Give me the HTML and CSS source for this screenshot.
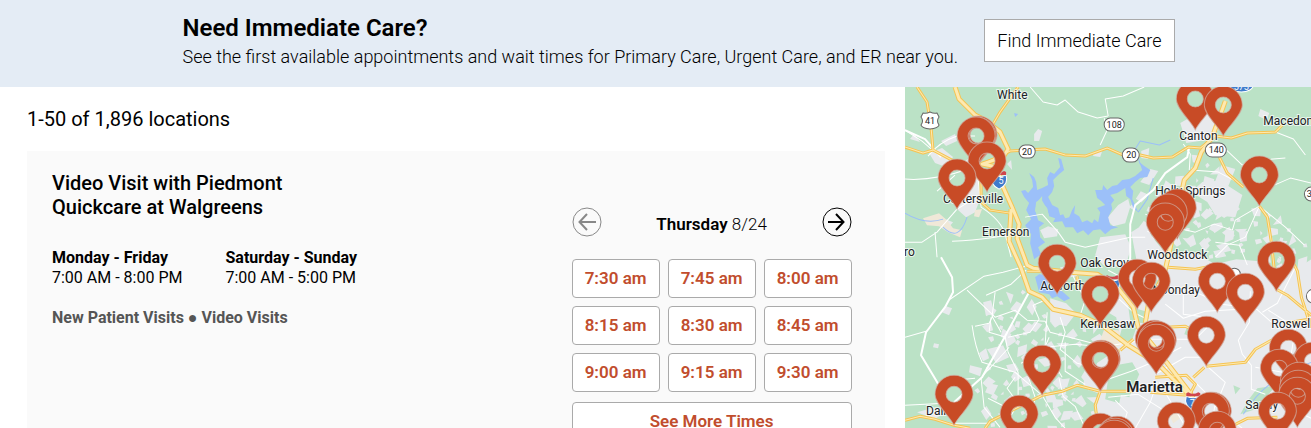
FILE: index.html
```html
<!doctype html>
<html lang="en">
    <head>
        <meta charset="utf-8">
        <title>Locations</title>
        <link rel="stylesheet" href="styles.css">
    </head>
    <body>
        <header class="banner">
            <div class="banner-inner">
                <div>
                    <h1>Need Immediate Care?</h1>
                    <p>See the first available appointments and wait times for Primary Care, Urgent Care, and ER near you.</p>
                </div>
                <a class="banner-link" href="#care">Find Immediate Care</a>
            </div>
        </header>
        <div class="page">
            <main class="results">
                <p class="count">1-50 of 1,896 locations</p>
                <article class="card">
                    <div class="info">
                        <h2>Video Visit with Piedmont Quickcare at Walgreens</h2>
                        <dl class="hours">
                            <div>
                                <dt>Monday - Friday</dt>
                                <dd>7:00 AM - 8:00 PM</dd>
                            </div>
                            <div>
                                <dt>Saturday - Sunday</dt>
                                <dd>7:00 AM - 5:00 PM</dd>
                            </div>
                        </dl>
                        <p class="visits">New Patient Visits ● Video Visits</p>
                    </div>
                    <div class="schedule">
                        <div class="day">
                            <button type="button" class="arrow" aria-label="Previous day" disabled>
                                <svg viewBox="0 0 30 30"><circle cx="15" cy="15" r="14"/><path d="M24 15H8M15 7L7.500 15L15 23"/></svg>
                            </button>
                            <p><b>Thursday</b> 8/24</p>
                            <button type="button" class="arrow" aria-label="Next day">
                                <svg viewBox="0 0 30 30"><circle cx="15" cy="15" r="14"/><path d="M6 15H22M14 7L21.500 15L14 23"/></svg>
                            </button>
                        </div>
                        <div class="slots">
                            <button type="button">7:30 am</button>
                            <button type="button">7:45 am</button>
                            <button type="button">8:00 am</button>
                            <button type="button">8:15 am</button>
                            <button type="button">8:30 am</button>
                            <button type="button">8:45 am</button>
                            <button type="button">9:00 am</button>
                            <button type="button">9:15 am</button>
                            <button type="button">9:30 am</button>
                        </div>
                        <button type="button" class="more">See More Times</button>
                    </div>
                </article>
            </main>
            <aside class="map">
                <svg viewBox="0 0 406 341" preserveAspectRatio="xMinYMin slice" role="img" aria-label="Map of locations">
                    <defs>
                        <path id="pin" d="M0 0C-4 -9 -19 -21 -19 -31A19 19 0 0 1 19 -31C19 -21 4 -9 0 0ZM0 -39A8 8 0 1 0 0 -23A8 8 0 1 0 0 -39Z"/>
                        <path id="blocks" d="M2 3l9-4 2 8-6 2zM20 2l3 1-1 4-3-2zM32 -1l4 7-8 5zM8 14l5-1 1 4-3 2zM24 15l10-2 2 5-9 6zM43 9l3-1 1 4-4 0zM-1 30l7-5 3 10-6 3zM16 31l5-3 3 3-5 4zM38 24l9-3-1 9-9 4zM6 44l4-1 1 3-4 2zM26 42l9-2 4 7-10 2zM44 40l4 1-1 4-3-1zM18 21l3 1-1 3z"/>
                        <g id="interstate">
                            <path class="shield" d="M-7 -4Q0 -1 7 -4Q10 5 0 10Q-10 5 -7 -4Z"/>
                            <path class="shield-top" d="M-7 -7L-5 -8Q0 -5 5 -8L7 -7L7 -4H-7Z"/>
                        </g>
                        <path id="state-roads" d="M12 0L22 15L26 40L28 63L45 72L60 80L76 93L76 115L85 123L105 126M0 60L18 66L28 63M80 76L105 64L120 63L140 62L160 68L180 69L202 61L218 68L235 68L248 71L267 70L283 60L295 61L310 49L326 51L342 46L370 45L377 38M113 0L95 25L85 42M314 70L322 86L338 100M354 119L362 130L366 155L371 202L382 208L406 228M0 333L15 329L30 332L49 338L65 341M80 341L85 334L101 326L137 308L157 304L172 298L195 304L228 304M195 304L190 318L192 333M301 279L340 275L350 262L366 253L383 252M263 180L290 182L311 178M386 172L392 184L396 210L403 232L380 236M203 256L213 264L210 277M215 263L228 252M261 240L280 239L290 244M245 305L282 308M250 290L281 288L290 297L284 308M299 280L288 290M322 341L342 331L372 330M122 184H145M172 189V202"/>
                        <path id="freeways" d="M50 0L54 12L70 28L80 33L95 45L103 62L98 70L77 77L92 80L98 100L107 120L114 137L112 151L122 178L128 181L165 185L192 187L212 200L228 220L233 240L262 276L285 306L305 341M106 122L104 154L116 181L124 204L137 210L148 222L175 228L197 238L223 258L252 276L285 309M320 14L307 50L296 65L290 81L279 93L276 108L264 165L259 187L243 218L240 236"/>
                    </defs>
                    <rect class="land" width="406" height="341"/>

                    <!-- built-up areas -->
                    <g class="urban">
                        <path d="M60 74L68 68L73 93L75 112L70 125L61 130L53 123L55 108L62 98ZM24 66L37 61L48 70L41 80L30 76ZM9 47L15 55L5 52ZM36 54l14-7 2 7-11 5zM129 47l4-5 4 2-3 10-5 0zM188 65l9-1-2 6-7-1z"/>
                        <path d="M135 143l8-4 10 3-1 7-13 2zM201 132L213 118L223 112L225 120L220 136L208 139ZM195 150L220 147L226 160L220 180L198 178L190 168ZM235 95L245 82L253 84L244 98ZM236 64l8-3-1 11-7-1zM275 36L300 22L313 43L301 53L281 56Z"/>
                        <path d="M226 145L240 136L247 150L265 172L290 166L310 177L331 172L354 174L368 183L382 176L392 181L406 172V341H200L190 322L195 307L178 300L180 283L192 277L186 258L202 245L214 246L211 230L196 221L210 207L225 200L218 185L232 177Z"/>
                        <path d="M145 211L161 216L171 226L161 239L145 235ZM155 180L168 178L172 189L157 191Z"/>
                        <path d="M316 78L330 82L323 99L337 108L330 130L310 128L302 115L286 105L297 95L310 94Z"/>
                        <path d="M82 262L98 258L104 270L91 276ZM78 215l8-2 3 12-8 4zM84 296l9 2-5 10-8-3zM65 278l12 3-2 8-11-4z"/>
                        <use href="#blocks" transform="translate(282 122)"/>
                        <use href="#blocks" transform="translate(283 121) rotate(80)"/>
                        <use href="#blocks" transform="translate(345 118) rotate(20)"/>
                        <use href="#blocks" transform="translate(355 148)"/>
                        <use href="#blocks" transform="translate(330 112) rotate(70)"/>
                        <use href="#blocks" transform="translate(286 64) rotate(30)"/>
                        <use href="#blocks" transform="translate(262 90) rotate(60)"/>
                        <use href="#blocks" transform="translate(77 226) rotate(-40)"/>
                        <use href="#blocks" transform="translate(75 236)"/>
                        <use href="#blocks" transform="translate(152 226) rotate(70)"/>
                        <use href="#blocks" transform="translate(122 262) rotate(10)"/>
                        <use href="#blocks" transform="translate(158 246) rotate(-20)"/>
                        <use href="#blocks" transform="translate(112 280) rotate(70)"/>
                        <use href="#blocks" transform="translate(128 291) rotate(15)"/>
                        <use href="#blocks" transform="translate(182 280) rotate(70)"/>
                        <path d="M41 219l6 2-3 7-7-3zM29 256l5 1-1 4-5-1zM38 131l10 4-5 6zM12 325l18-5 8 6-8 6zM70 55l6 4-3 8-7-5zM106 73l1 10-5-6zM355 22l9 4-3 7-8-4z"/>
                    </g>
                    <path class="sand" d="M18 131L34 126L42 133L48 141L57 143L55 150L43 145L34 139L22 138ZM70 123l7-1-3 8-5-1zM199 242l14 1 9 12-12 5-15-7zM261 323l12-3 5 9-10 7z"/>
                    <g class="park">
                        <path d="M205 279l22-4 7 12-10 23-21-6zM185 259l17-4 3 12-15 10zM342 314l10-13 19-3-21 24-15 5zM223 219l17 5-2 12-13-2zM218 236l13 5-5 14-12-4zM251 192l6 4-6 16-5-9zM328 298l7 3-5 6zM203 291l15 6-4 19-14-4zM282 239l7 3-3 7-7-2z"/>
                    </g>

                    <!-- lakes and creeks -->
                    <g class="lake">
                        <path d="M116 104L120 103L123 106L128 100L127 93L124 86L129 90L131 95L132 103L137 101L143 98L142 91L145 85L149 87L155 80L153 71L156 72L159 83L153 88L148 93L149 99L147 105L143 110L147 118L153 121L155 128L158 127L160 131L164 130L167 123L170 118L169 126L174 129L177 135L182 133L187 136L189 132L193 135L195 125L192 121L200 118L196 114L192 111L190 103L197 103L198 98L202 103L207 99L212 98L217 93L224 92L230 89L237 83L234 75L239 79L245 83L242 90L235 91L230 95L225 100L228 104L227 112L233 125L228 121L225 112L221 109L220 101L212 106L205 108L209 113L206 117L207 122L203 130L205 138L213 140L206 142L200 147L195 142L188 143L183 148L178 143L172 146L168 140L160 140L157 134L148 135L150 131L144 129L142 121L137 116L137 109L132 115L130 123L133 133L139 136L134 140L135 150L140 155L133 160L136 167L129 172L125 156L126 147L120 138L126 132L121 123L124 116L119 110Z"/>
                        <path d="M130 190L134 187L142 188L143 202L151 202L157 204L165 211L159 214L152 209L147 211L144 207L134 205ZM109 26l4 1-3 3z"/>
                    </g>
                    <path class="park" d="M131 115l5-3 6 10 2 8-9 2-5-8z"/>
                    <path class="river" d="M233 125L242 112L248 91M235 77L230 62L235 54L254 58L265 53M0 126Q20 138 38 132M38 140Q54 156 62 130M338 327Q360 290 406 275"/>

                    <!-- local roads -->
                    <g class="road">
                        <path d="M0 43L17 54L31 66M0 92Q30 94 63 82M23 69Q34 55 52 49H70M0 155L17 155L32 145L52 122L75 108M30 145L32 170M47 154Q90 152 113 145M32 104L50 88M61 80L73 92L76 120Q96 133 100 147L106 170"/>
                        <path d="M125 0L138 15L152 18L160 13L173 25L192 31L203 29M203 29L200 12L218 9L239 0M199 31L202 43L195 58M120 130L137 127L153 145L160 155L180 160L225 150L240 150"/>
                        <path class="wide" d="M36 170L47 190L48 205L40 220L21 245L16 268L31 293L43 314M125 203L100 249L77 290L49 315M284 60L282 70L260 86L248 103L230 118L225 137L225 170L222 200M0 43L20 52L36 70"/>
                        <path d="M45 212L79 189L98 185L125 178M62 203L90 230L110 223L122 233L140 234L145 245L203 260M0 250L21 244M100 249L103 265L113 285L113 308M67 238Q70 260 77 275L110 285L137 308M120 285L140 260L170 257L203 260M86 230L84 245L101 250M76 291L79 320L95 340M142 225L140 258L148 275L157 290M49 293L70 291M0 318L40 316L49 336M50 336H83M137 308L150 330L160 341"/>
                        <path d="M278 57L285 67L284 83M318 60L337 78L355 73L380 71M286 83L313 85L336 97M242 144L250 148L265 139L290 145L309 137L327 143L330 133L354 119M354 119L340 150L322 158L310 170M354 119L380 140L399 158M362 101L385 91L406 96M370 45L388 52L400 68M240 127L263 136M310 155L334 158L342 178"/>
                        <path d="M203 183L235 200L253 204L278 200L302 210L316 217L350 221L366 235M278 200V227L302 230M260 217L278 231L300 224L335 222M345 204L344 235L333 253L337 267L346 278V302L360 307M207 258L245 252H290L302 240M203 292L226 284L245 276L276 260M250 287L280 270H304M254 295L281 341M203 310L233 307L265 327M285 290L310 315L306 341M302 279L320 295L310 319L337 341M230 341L245 315L252 295M340 320L372 315L406 331M363 223L390 240L386 266M390 180L372 216L357 225M350 280L377 285M214 212L228 225L256 239M168 189L180 213L175 228M160 255V284L180 297"/>
                        <path d="M90 205L87 229L96 245M121 183L106 197L81 208M70 239L84 236L88 228M103 250L125 245L134 232L128 218L142 212M104 260L95 270L77 289M116 276L138 264L144 250M155 230L160 245L155 262L172 276L188 280M110 290L102 301L113 316L105 330M123 289L130 310L124 341M154 291L158 309L170 319L180 341M83 311L99 319M210 313L222 325L217 341"/>
                    </g>

                    <!-- highways: casing first, then the light centre line -->
                    <use class="casing" href="#state-roads"/>
                    <use class="casing thick" href="#freeways"/>
                    <use class="centre" href="#state-roads"/>
                    <use class="centre thick" href="#freeways"/>

                    <!-- road numbers -->
                    <g class="number">
                        <path d="M18 26Q21 27 25 25Q29 27 32 26L34 30Q31 34 34 38Q33 41 25 42Q17 41 16 38Q19 34 16 30Z"/>
                        <rect x="199" y="31" width="20" height="13" rx="6"/>
                        <rect x="114" y="58" width="16" height="13" rx="6"/>
                        <rect x="217" y="61" width="17" height="14" rx="7"/>
                        <rect x="300" y="56" width="21" height="14" rx="7"/>
                        <rect x="399" y="100" width="20" height="14" rx="7"/>
                        <circle cx="329" cy="187" r="6"/>
                        <circle cx="408" cy="209" r="7"/>
                        <text x="25" y="37">41</text>
                        <text x="209" y="41">108</text>
                        <text x="122" y="68">20</text>
                        <text x="226" y="71">20</text>
                        <text x="311" y="66">140</text>
                        <text x="404" y="110">3</text>
                    </g>
                    <use href="#interstate" x="94" y="92"/>
                    <use href="#interstate" x="207" y="196"/>
                    <use href="#interstate" x="288" y="313"/>
                    <ellipse class="shield" cx="336" cy="-2" rx="12" ry="7"/>
                    <g class="shield-text">
                        <text x="96" y="97">5</text>
                        <text x="287" y="319">7</text>
                        <text x="336" y="3">575</text>
                    </g>

                    <g class="place">
                        <text x="92" y="12">White</text>
                        <text x="274" y="53">Canton</text>
                        <text x="358" y="38">Macedonia</text>
                        <text x="250" y="108">Holly Springs</text>
                        <text x="38" y="116">Cartersville</text>
                        <text x="77" y="149">Emerson</text>
                        <text x="-1" y="169">ro</text>
                        <text x="242" y="172">Woodstock</text>
                        <text x="175" y="180">Oak Grove</text>
                        <text x="135" y="203">Acworth</text>
                        <text x="247" y="207">Noonday</text>
                        <text x="175" y="241">Kennesaw</text>
                        <text x="366" y="241">Roswell</text>
                        <text x="21" y="328">Dallas</text>
                        <text x="340" y="322">Sandy</text>
                        <text class="city" x="221" y="305">Marietta</text>
                    </g>

                    <g class="pins">
                        <use href="#pin" x="73" y="79"/><use href="#pin" x="72" y="80"/><use href="#pin" x="71" y="80"/>
                        <use href="#pin" x="82" y="105"/>
                        <use href="#pin" x="52" y="122"/>
                        <use href="#pin" x="290" y="43"/>
                        <use href="#pin" x="318" y="49"/>
                        <use href="#pin" x="354" y="119"/>
                        <use href="#pin" x="272" y="152"/>
                        <use href="#pin" x="263" y="157"/>
                        <use href="#pin" x="260" y="166"/>
                        <use href="#pin" x="371" y="204"/>
                        <use href="#pin" x="152" y="207"/>
                        <use href="#pin" x="232" y="222"/>
                        <use href="#pin" x="246" y="225"/>
                        <use href="#pin" x="312" y="225"/>
                        <use href="#pin" x="340" y="236"/>
                        <use href="#pin" x="195" y="238"/>
                        <use href="#pin" x="301" y="279"/>
                        <use href="#pin" x="249" y="283"/><use href="#pin" x="252" y="284"/>
                        <use href="#pin" x="251" y="287"/>
                        <use href="#pin" x="383" y="292"/>
                        <use href="#pin" x="407" y="305"/>
                        <use href="#pin" x="196" y="303"/><use href="#pin" x="195" y="304"/>
                        <use href="#pin" x="137" y="308"/>
                        <use href="#pin" x="374" y="312"/>
                        <use href="#pin" x="394" y="325"/>
                        <use href="#pin" x="393" y="333"/>
                        <use href="#pin" x="392" y="340"/>
                        <use href="#pin" x="49" y="338"/>
                        <use href="#pin" x="307" y="355"/><use href="#pin" x="305" y="355"/>
                        <use href="#pin" x="372" y="355"/>
                        <use href="#pin" x="114" y="358"/>
                        <use href="#pin" x="271" y="365"/>
                        <use href="#pin" x="312" y="374"/>
                        <use href="#pin" x="195" y="376"/>
                        <use href="#pin" x="212" y="379"/><use href="#pin" x="210" y="381"/><use href="#pin" x="209" y="383"/>
                    </g>
                </svg>
            </aside>
        </div>
    </body>
</html>
```
FILE: styles.css
```css
* {
    box-sizing: border-box;
}
body {
    margin: 0;
    height: 100vh;
    display: flex;
    flex-direction: column;
    overflow: hidden;
    background-color: #fff;
    color: #000;
    font-family: Roboto, sans-serif;
    font-size: 16px;
    line-height: 20px;
}
h1,
h2,
p,
dl,
dd {
    margin: 0;
}
button {
    font: inherit;
    cursor: pointer;
}

.banner {
    padding: 12px 0;
    background-color: #e4ecf5;
}
.banner-inner {
    max-width: 1038px;
    margin: 0 auto;
    padding: 0 0 0 46px;
    display: flex;
    align-items: flex-start;
    justify-content: space-between;
    min-height: 63px;
}
.banner h1 {
    font-size: 24px;
    line-height: 32px;
    font-weight: 600;
}
.banner p {
    font-size: 18px;
    line-height: 26px;
    font-weight: 300;
}
.banner-link {
    margin-top: 7px;
    padding: 8px 12px;
    border: 1px solid #aaa;
    background-color: #fff;
    color: #000;
    font-size: 18px;
    line-height: 25px;
    font-weight: 300;
    text-decoration: none;
    white-space: nowrap;
}

.page {
    flex: 1;
    min-height: 0;
    display: flex;
}
.results {
    flex: 1;
    padding: 20px 20px 0 27px;
    overflow: hidden;
}
.count {
    font-size: 20px;
    line-height: 24px;
}
.card {
    margin-top: 20px;
    padding: 20px 33px 20px 25px;
    display: flex;
    justify-content: space-between;
    background-color: #fafafa;
}
.info h2 {
    max-width: 280px;
    font-size: 20px;
    line-height: 24px;
    font-weight: 500;
}
.hours {
    margin-top: 29px;
    display: flex;
    gap: 43px;
}
.hours dt {
    font-weight: 700;
}
.visits {
    margin-top: 20px;
    color: #555;
    font-weight: 700;
}

.schedule {
    width: 280px;
    padding-top: 36px;
}
.day {
    display: flex;
    align-items: center;
    justify-content: space-between;
    font-size: 17px;
    font-weight: 300;
}
.day p {
    padding-top: 4px;
}
.day b {
    font-weight: 600;
}
.arrow {
    width: 30px;
    height: 30px;
    padding: 0;
    border: 0;
    background: none;
    color: #000;
}
.arrow:disabled {
    color: #888;
}
.arrow svg {
    display: block;
    fill: none;
    stroke: currentColor;
    stroke-width: 2;
}
.arrow circle {
    stroke-width: 1;
}
.slots {
    margin: 22px 0 10px;
    display: grid;
    grid-template-columns: repeat(3, 1fr);
    gap: 8px;
}
.slots button,
.more {
    height: 39px;
    padding: 0 0 2px;
    border: 1px solid #aaa;
    border-radius: 4px;
    background-color: #fff;
    color: #c14d2d;
    font-size: 17px;
    font-weight: 600;
}
.more {
    width: 100%;
}

.map {
    width: 31%;
    overflow: hidden;
}
.map svg {
    display: block;
    width: 100%;
    height: 100%;
}
.land {
    fill: #bbe2c6;
}
.urban {
    fill: #e8eaed;
}
.sand {
    fill: #f0e8d8;
}
.park {
    fill: #bbe2c6;
}
.lake {
    fill: #9cc0f9;
}
.river,
.road,
.casing,
.centre {
    fill: none;
    stroke-linejoin: round;
}
.river {
    stroke: #9cc0f9;
    stroke-width: 1;
}
.road {
    stroke: #fff;
    stroke-width: 1;
}
.road .wide {
    stroke-width: 2;
}
.casing {
    stroke: #f5c453;
    stroke-width: 3;
}
.centre {
    stroke: #fde9b0;
    stroke-width: 1;
}
.casing.thick {
    stroke-width: 5;
}
.centre.thick {
    stroke-width: 3;
}
.number rect,
.number circle,
.number path {
    fill: #fff;
    stroke: #666;
}
.number text,
.shield-text text {
    font-size: 9px;
    text-anchor: middle;
    fill: #222;
}
.shield {
    fill: #3f7ccc;
    stroke: #fff;
}
.shield-top {
    fill: #d0454c;
}
.shield-text text {
    fill: #fff;
}
.place text {
    font-size: 12px;
    fill: #202124;
    stroke: #fff;
    stroke-width: 2;
    stroke-opacity: 0.7;
    paint-order: stroke;
}
.place .city {
    font-size: 15px;
    font-weight: 600;
}
.pins {
    fill: #c84b26;
    fill-rule: evenodd;
    stroke: #d0b0a6;
    stroke-opacity: 0.7;
    stroke-width: 1;
}
```
